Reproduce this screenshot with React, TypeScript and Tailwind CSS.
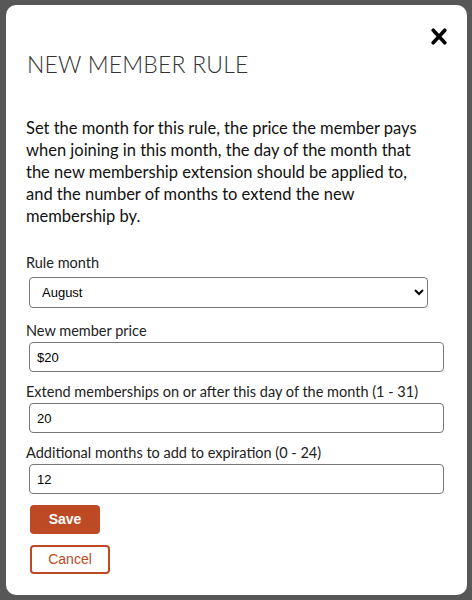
import { useState } from "react";

const months = [
  "January",
  "February",
  "March",
  "April",
  "May",
  "June",
  "July",
  "August",
  "September",
  "October",
  "November",
  "December",
];

const inputClass =
  "ml-[3px] block h-[30px] w-[415px] rounded-[4px] border border-[#767676] bg-white px-[7px] text-[13px] text-black outline-none font-['Liberation_Sans',Arial,sans-serif]";

function Field({ label, value, onChange }: { label: string; value: string; onChange: (v: string) => void }) {
  return (
    <div>
      <label className="block text-[14.5px] leading-[20px] text-[#222]">{label}</label>
      <input className={`${inputClass} mt-[1px]`} value={value} onChange={(e) => onChange(e.target.value)} />
    </div>
  );
}

export default function App() {
  const [month, setMonth] = useState("August");
  const [price, setPrice] = useState("$20");
  const [day, setDay] = useState("20");
  const [extra, setExtra] = useState("12");

  return (
    <div className="min-h-[600px] bg-[#575757] px-[6px] pt-[5px] pb-[5px] font-['Lato',sans-serif]">
      <div className="h-[590px] w-[461px] rounded-[10px] bg-white px-[20px]">
        <div className="flex justify-end pt-[23px]">
          <button type="button" aria-label="Close" className="block">
            <svg width="16" height="17" viewBox="0 0 16 17">
              <path d="M2.2 2.2 L13.8 14.8 M13.8 2.2 L2.2 14.8" stroke="#000" strokeWidth="3.6" strokeLinecap="round" />
            </svg>
          </button>
        </div>

        <h2 className="mt-[4px] pl-[1px] text-[23px] font-light leading-[30px] tracking-[0.2px] text-[#333]">
          NEW MEMBER RULE
        </h2>

        <p className="mt-[38px] text-[16.5px] leading-[22px] text-[#111]">
          Set the month for this rule, the price the member pays
          <br />
          when joining in this month, the day of the month that
          <br />
          the new membership extension should be applied to,
          <br />
          and the number of months to extend the new
          <br />
          membership by.
        </p>

        <div className="mt-[26px]">
          <label className="block text-[14.5px] leading-[20px] text-[#222]">Rule month</label>
          <select
            className="ml-[3px] mt-[4px] block h-[31px] w-[399px] rounded-[4px] border border-[#767676] bg-white px-[8px] text-[13px] text-black font-['Liberation_Sans',Arial,sans-serif]"
            value={month}
            onChange={(e) => setMonth(e.target.value)}
          >
            {months.map((m) => (
              <option key={m}>{m}</option>
            ))}
          </select>
        </div>

        <div className="mt-[13px] flex flex-col gap-[10px]">
          <Field label="New member price" value={price} onChange={setPrice} />
          <Field label="Extend memberships on or after this day of the month (1 - 31)" value={day} onChange={setDay} />
          <Field label="Additional months to add to expiration (0 - 24)" value={extra} onChange={setExtra} />
        </div>

        <div className="ml-[4px] mt-[11px] flex flex-col items-start gap-[11px] font-['Liberation_Sans',Arial,sans-serif]">
          <button
            type="button"
            className="h-[29px] w-[70px] rounded-[4px] bg-[#bd4a24] text-[14px] font-bold text-white"
          >
            Save
          </button>
          <button
            type="button"
            className="h-[29px] w-[80px] rounded-[4px] border-2 border-[#bd4a24] bg-white text-[14px] text-[#bd4a24]"
          >
            Cancel
          </button>
        </div>
      </div>
    </div>
  );
}
